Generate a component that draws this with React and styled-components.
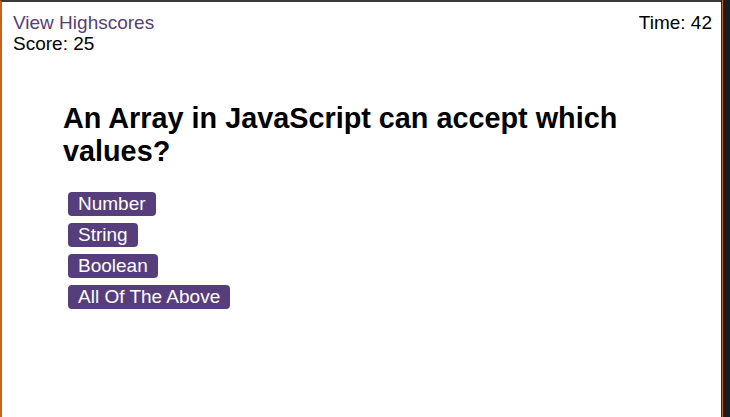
import styled, { createGlobalStyle } from "styled-components";

//
//  Quiz page: header with highscores link, score and timer, then the question card.
//

const GlobalStyle = createGlobalStyle`
  html, body {
    margin: 0;
    padding: 0;
    height: 100%;
    background: #1c1c1c;
  }
  #root {
    height: 100%;
  }
`;

const questions = [
  {
    title: "An Array in JavaScript can accept which values?",
    choices: ["Number", "String", "Boolean", "All Of The Above"],
  },
];

const App = () => {
  const q = questions[0];
  return (
    <>
      <GlobalStyle />
      <Screen>
        <Page>
          <Header>
            <div>
              <Link href="#">View Highscores</Link>
              <Score>Score: 25</Score>
            </div>
            <Timer>Time: 42</Timer>
          </Header>
          <Quiz>
            <Question>{q.title}</Question>
            <Choices>
              {q.choices.map((c) => (
                <Choice key={c}>{c}</Choice>
              ))}
            </Choices>
          </Quiz>
        </Page>
      </Screen>
    </>
  );
};

const Screen = styled.div`
  display: flex;
  height: 100%;
  background: #1c1c1c;
`;

const Page = styled.div`
  width: 721px;
  height: 100%;
  box-sizing: border-box;
  background: #fff;
  border-top: 2px solid #3a3a3a;
  border-left: 2px solid #c4651f;
  box-shadow: 1px 0 0 #2a2a2a, 2px 0 0 #c4651f;
  font-family: "Liberation Sans", Arial, sans-serif;
`;

const Header = styled.header`
  display: flex;
  justify-content: space-between;
  align-items: flex-start;
  padding: 10px 9px 0 11px;
  font-size: 19px;
  line-height: 21px;
`;

const Link = styled.a`
  display: block;
  color: #563d7c;
  text-decoration: none;
`;

const Score = styled.div`
  color: #000;
`;

const Timer = styled.div`
  color: #000;
`;

const Quiz = styled.main`
  padding: 48px 60px 0 61px;
`;

const Question = styled.h1`
  margin: 0;
  font-size: 28.8px;
  line-height: 33px;
  font-weight: 700;
  color: #000;
`;

const Choices = styled.div`
  display: flex;
  flex-direction: column;
  align-items: flex-start;
  gap: 7px;
  margin: 24px 0 0 5px;
`;

const Choice = styled.button`
  border: none;
  padding: 0 10px;
  height: 24px;
  line-height: 24px;
  border-radius: 4px;
  background: #563d7c;
  color: #fff;
  font-family: "Liberation Sans", Arial, sans-serif;
  font-size: 19px;
  cursor: pointer;
`;

export default App;
